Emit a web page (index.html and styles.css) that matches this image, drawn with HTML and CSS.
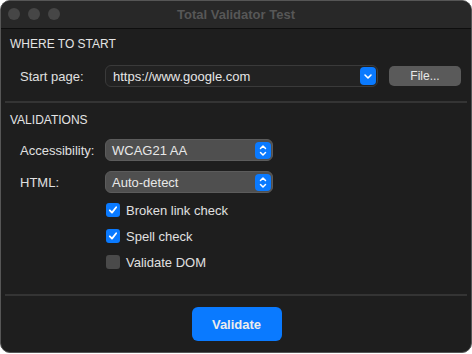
FILE: index.html
```html
<!DOCTYPE html>
<html>
<head>
<meta charset="utf-8">
<link rel="stylesheet" href="styles.css">
</head>
<body>
<div class="window">
  <div class="titlebar">
    <div class="lights"><span class="light"></span><span class="light"></span><span class="light"></span></div>
    <div class="title">Total Validator Test</div>
  </div>
  <div class="content">
    <section class="section first">
      <div class="heading">WHERE TO START</div>
      <div class="row start-row">
        <span class="label">Start page:</span>
        <div class="combo">
          <span class="combo-text">https://www.google.com</span>
          <span class="combo-btn">
            <svg width="10" height="7" viewBox="0 0 10 7"><path d="M2 2 L5 5 L8 2" fill="none" stroke="#fff" stroke-width="1.6" stroke-linecap="round" stroke-linejoin="round"/></svg>
          </span>
        </div>
        <button class="file-btn">File...</button>
      </div>
    </section>
    <div class="sep"></div>
    <section class="section second">
      <div class="heading">VALIDATIONS</div>
      <div class="row popup-row">
        <span class="label">Accessibility:</span>
        <div class="popup w-acc">
          <span class="popup-text">WCAG21 AA</span>
          <span class="popup-btn">
            <svg width="10" height="13" viewBox="0 0 10 13"><path d="M2.5 4.5 L5 2 L7.5 4.5 M2.5 8.5 L5 11 L7.5 8.5" fill="none" stroke="#fff" stroke-width="1.5" stroke-linecap="round" stroke-linejoin="round"/></svg>
          </span>
        </div>
      </div>
      <div class="row popup-row second-popup">
        <span class="label">HTML:</span>
        <div class="popup w-acc">
          <span class="popup-text">Auto-detect</span>
          <span class="popup-btn">
            <svg width="10" height="13" viewBox="0 0 10 13"><path d="M2.5 4.5 L5 2 L7.5 4.5 M2.5 8.5 L5 11 L7.5 8.5" fill="none" stroke="#fff" stroke-width="1.5" stroke-linecap="round" stroke-linejoin="round"/></svg>
          </span>
        </div>
      </div>
      <div class="checks">
        <label class="check"><span class="box on"><svg width="12" height="12" viewBox="0 0 12 12"><path d="M2.8 6.3 L5 8.6 L9.2 3.2" fill="none" stroke="#fff" stroke-width="1.8" stroke-linecap="round" stroke-linejoin="round"/></svg></span><span>Broken link check</span></label>
        <label class="check"><span class="box on"><svg width="12" height="12" viewBox="0 0 12 12"><path d="M2.8 6.3 L5 8.6 L9.2 3.2" fill="none" stroke="#fff" stroke-width="1.8" stroke-linecap="round" stroke-linejoin="round"/></svg></span><span>Spell check</span></label>
        <label class="check"><span class="box"></span><span>Validate DOM</span></label>
      </div>
    </section>
    <div class="sep"></div>
    <div class="footer">
      <button class="validate">Validate</button>
    </div>
  </div>
</div>
</body>
</html>
```

FILE: styles.css
```css
html, body {
  margin: 0;
  padding: 0;
  background: #ffffff;
}
body {
  width: 472px;
  height: 354px;
  overflow: hidden;
  font-family: "Liberation Sans", Arial, sans-serif;
  font-size: 13px;
  color: #dedede;
}
.window {
  box-sizing: border-box;
  width: 472px;
  height: 353px;
  border: 1px solid #565656;
  border-radius: 10px;
  background: #1e1e1e;
  overflow: hidden;
}
.titlebar {
  height: 27px;
  background: #282828;
  border-bottom: 1px solid #0e0e0e;
  display: flex;
  align-items: center;
  justify-content: center;
  position: relative;
}
.lights {
  position: absolute;
  left: 7px;
  top: 7px;
  display: flex;
  gap: 8px;
}
.light {
  width: 12px;
  height: 12px;
  border-radius: 50%;
  background: #464646;
}
.title {
  font-weight: bold;
  font-size: 13px;
  color: #575757;
}
.content {
  padding: 0 4px;
}
.section {
  padding: 0 0 0 5px;
}
.heading {
  font-size: 12px;
  line-height: 16px;
  color: #e4e4e4;
}
.first .heading {
  padding-top: 7px;
}
.second .heading {
  padding-top: 9px;
}
.row {
  display: flex;
  align-items: center;
  padding-left: 10px;
}
.label {
  width: 85px;
  color: #e0e0e0;
}
.start-row {
  margin-top: 13px;
  margin-bottom: 14px;
}
.combo {
  box-sizing: border-box;
  width: 273px;
  height: 22px;
  border: 1px solid #3a3a3a;
  border-radius: 6px;
  background: #222222;
  display: flex;
  align-items: center;
  justify-content: space-between;
  padding: 0 1px 0 7px;
}
.combo-text {
  color: #e6e6e6;
}
.combo-btn {
  width: 16px;
  height: 18px;
  border-radius: 4px;
  background: #0a7aff;
  display: flex;
  align-items: center;
  justify-content: center;
}
.file-btn {
  margin-left: 11px;
  width: 72px;
  height: 20px;
  border: none;
  border-radius: 5px;
  background: #5a5a5a;
  color: #e8e8e8;
  font-family: "Liberation Sans", Arial, sans-serif;
  font-size: 12px;
  padding: 0;
}
.sep {
  height: 2px;
  background: #343434;
}
.popup-row {
  margin-top: 11px;
}
.second-popup {
  margin-top: 10px;
}
.popup {
  box-sizing: border-box;
  height: 22px;
  width: 168px;
  border-radius: 6px;
  background: #4f4f4f;
  border: 1px solid #5c5c5c;
  display: flex;
  align-items: center;
  justify-content: space-between;
  padding: 0 1px 0 6px;
}
.popup-text {
  color: #e8e8e8;
}
.popup-btn {
  width: 16px;
  height: 17px;
  border-radius: 4px;
  background: #0a7aff;
  display: flex;
  align-items: center;
  justify-content: center;
}
.checks {
  display: flex;
  flex-direction: column;
  gap: 6px;
  padding-left: 96px;
  margin-top: 7px;
  margin-bottom: 22px;
}
.check {
  display: flex;
  align-items: center;
  height: 20px;
  gap: 6px;
  color: #e0e0e0;
}
.box {
  width: 14px;
  height: 14px;
  border-radius: 3px;
  background: #4a4a4a;
  display: flex;
  align-items: center;
  justify-content: center;
}
.box.on {
  background: #0a7aff;
}
.footer {
  display: flex;
  justify-content: center;
  padding-top: 11px;
}
.validate {
  width: 90px;
  height: 34px;
  border: none;
  border-radius: 6px;
  background: #0a7aff;
  color: #ececec;
  font-family: "Liberation Sans", Arial, sans-serif;
  font-weight: bold;
  font-size: 13px;
  padding: 0;
  margin-left: 1px;
}
```
